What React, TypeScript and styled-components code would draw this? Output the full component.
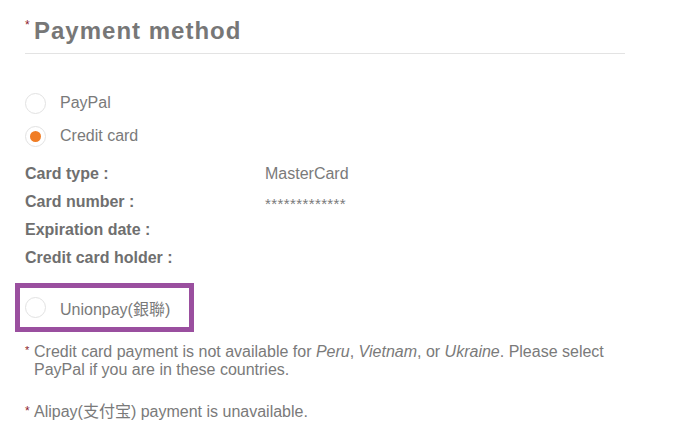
import React from "react";
import styled, { createGlobalStyle } from "styled-components";

const Global = createGlobalStyle`
  html, body { margin: 0; padding: 0; background: #fff; }
  body { font-family: "Liberation Sans", Arial, "Noto Sans CJK TC", sans-serif; color: #777; }
`;

const Page = styled.div`
  width: 600px;
  padding: 17px 25px 0 25px;
  display: flex;
  flex-direction: column;
`;

const Header = styled.div`
  display: flex;
  align-items: flex-start;
  padding-bottom: 8px;
  border-bottom: 1px solid #e3e3e3;
`;

const Star = styled.span<{ $size?: number }>`
  color: #8d1c2c;
  font-size: ${(p) => p.$size ?? 11}px;
  line-height: 1;
  width: 9px;
  flex: none;
  margin-top: 2px;
`;

const Title = styled.h2`
  margin: 0;
  font-size: 24px;
  line-height: 28px;
  font-weight: bold;
  letter-spacing: 1px;
  color: #777;
`;

const Options = styled.div`
  display: flex;
  flex-direction: column;
  gap: 11px;
  margin-top: 38px;
`;

const RadioRow = styled.label`
  display: flex;
  align-items: center;
  height: 22px;
  font-size: 16px;
  color: #7a7a7a;
  gap: 14px;
`;

const Circle = styled.span<{ $checked?: boolean }>`
  width: 19px;
  height: 19px;
  border-radius: 50%;
  border: 1px solid #e2e2e2;
  display: flex;
  align-items: center;
  justify-content: center;
  flex: none;
  &::after {
    content: "";
    width: 11px;
    height: 11px;
    border-radius: 50%;
    background: ${(p) => (p.$checked ? "#f07d25" : "transparent")};
  }
`;

const Details = styled.div`
  display: grid;
  grid-template-columns: 240px 1fr;
  grid-auto-rows: 28px;
  align-items: center;
  margin-top: 13px;
`;

const Label = styled.div`
  font-size: 16px;
  font-weight: bold;
  color: #6f6f6f;
`;

const Value = styled.div<{ $small?: boolean }>`
  font-size: ${(p) => (p.$small ? 15 : 16)}px;
  color: #7a7a7a;
  letter-spacing: ${(p) => (p.$small ? "0.4px" : "0")};
  margin-top: ${(p) => (p.$small ? "2px" : "0")};
`;

const Highlight = styled.div`
  align-self: flex-start;
  margin: 11px 0 0 -10px;
  width: 164px;
  height: 39px;
  border: 5px solid #9a4f9f;
  padding-left: 5px;
  display: flex;
  align-items: center;
`;

const Note = styled.div<{ $gap: number }>`
  display: flex;
  align-items: flex-start;
  margin-top: ${(p) => p.$gap}px;
  font-size: 16px;
  line-height: 18px;
  color: #7a7a7a;
`;

const NoteText = styled.p`
  margin: 0;
  flex: 1;
  & em { font-style: italic; }
`;

export default function App() {
  return (
    <>
      <Global />
      <Page>
        <Header>
          <Star $size={12}>*</Star>
          <Title>Payment method</Title>
        </Header>
        <Options>
          <RadioRow>
            <Circle />
            PayPal
          </RadioRow>
          <RadioRow>
            <Circle $checked />
            Credit card
          </RadioRow>
        </Options>
        <Details>
          <Label>Card type :</Label>
          <Value>MasterCard</Value>
          <Label>Card number :</Label>
          <Value $small>*************</Value>
          <Label>Expiration date :</Label>
          <Value />
          <Label>Credit card holder :</Label>
          <Value />
        </Details>
        <Highlight>
          <RadioRow>
            <Circle />
            Unionpay(銀聯)
          </RadioRow>
        </Highlight>
        <Note $gap={11}>
          <Star>*</Star>
          <NoteText>
            Credit card payment is not available for <em>Peru</em>, <em>Vietnam</em>, or{" "}
            <em>Ukraine</em>. Please select PayPal if you are in these countries.
          </NoteText>
        </Note>
        <Note $gap={24}>
          <Star $size={12}>*</Star>
          <NoteText>Alipay(支付宝) payment is unavailable.</NoteText>
        </Note>
      </Page>
    </>
  );
}
